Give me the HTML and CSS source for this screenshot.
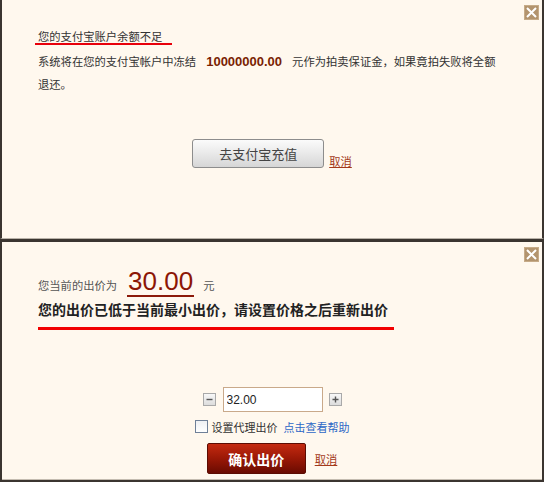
FILE: index.html
```html
<!DOCTYPE html>
<html lang="zh-CN">
<head>
    <meta charset="utf-8">
    <title>出价提示</title>
    <link rel="stylesheet" href="styles.css">
</head>
<body>
    <div class="panel panel-top">
        <a class="close" href="#" title="关闭">
            <svg width="15" height="15" viewBox="0 0 15 15"><rect x="0" y="0" width="15" height="15" fill="#b3946e"/><rect x="0.5" y="0.5" width="14" height="14" fill="none" stroke="#c6ab88"/><path d="M3 3L12 12M12 3L3 12" stroke="#fff" stroke-width="2"/></svg>
        </a>

        <div class="title">您的支付宝账户余额不足</div>
        <p class="notice">系统将在您的支付宝帐户中冻结<span class="amount">10000000.00</span>元作为拍卖保证金，如果竟拍失败将全额退还。</p>

        <div class="actions">
            <button type="button" class="btn-recharge">去支付宝充值</button>
            <a class="cancel" href="#">取消</a>
        </div>
    </div>

    <div class="panel panel-bottom">
        <a class="close" href="#" title="关闭">
            <svg width="15" height="15" viewBox="0 0 15 15"><rect x="0" y="0" width="15" height="15" fill="#b3946e"/><rect x="0.5" y="0.5" width="14" height="14" fill="none" stroke="#c6ab88"/><path d="M3 3L12 12M12 3L3 12" stroke="#fff" stroke-width="2"/></svg>
        </a>

        <div class="current">
            <span class="label">您当前的出价为</span>
            <span class="price">30.00</span>
            <span class="label unit">元</span>
        </div>
        <div class="warning">您的出价已低于当前最小出价，请设置价格之后重新出价</div>

        <div class="stepper">
            <span class="step">
                <svg width="13" height="13" viewBox="0 0 13 13"><path d="M3.5 6.5H9.5" stroke="#555" stroke-width="1.4"/></svg>
            </span>
            <input type="text" class="bid" value="32.00">
            <span class="step">
                <svg width="13" height="13" viewBox="0 0 13 13"><path d="M3.5 6.5H9.5M6.5 3.5V9.5" stroke="#555" stroke-width="1.4"/></svg>
            </span>
        </div>

        <div class="proxy">
            <span class="checkbox"></span>
            <span class="proxy-label">设置代理出价</span>
            <a class="help" href="#">点击查看帮助</a>
        </div>

        <div class="confirm">
            <button type="button" class="btn-confirm">确认出价</button>
            <a class="cancel" href="#">取消</a>
        </div>
    </div>
</body>
</html>
```

FILE: styles.css
```css
body { margin: 0; background-color: #fff8ee; font-family: "Noto Sans CJK SC", "Liberation Sans", sans-serif; font-size: 11.3px; color: #333; }

.panel { position: relative; box-sizing: border-box; width: 544px; background-color: #fff8ee; border-left: 2px solid #3b3530; border-right: 2px solid #3b3530; padding: 0 36px; }
.panel-top { height: 239px; padding-top: 30px; border-bottom: 1px solid #b9b2a8; }
.panel-bottom { height: 243px; padding-top: 26px; border-top: 3px solid #3b3530; border-bottom: 2px solid #3b3530; box-shadow: inset 0 -1px 0 #c4bcb0; }

.close { position: absolute; top: 5px; right: 3px; display: block; width: 15px; height: 15px; line-height: 0; }

.title { width: fit-content; margin-left: -3px; padding: 0 10px 0 3px; line-height: 13px; border-bottom: 2px solid #e8000b; }
.notice { width: 465px; margin: 5px 0 0 0; line-height: 23px; }
.amount { margin: 0 10px; font-family: "Liberation Sans", sans-serif; font-size: 13px; font-weight: bold; color: #7a1f02; }

.actions { display: flex; justify-content: center; align-items: flex-end; gap: 5px; margin-top: 43px; }
.btn-recharge { box-sizing: border-box; width: 132px; height: 29px; padding: 0; border: 1px solid #8d8d8d; border-radius: 3px; background: linear-gradient(#fbfbfb, #e9e9e9 50%, #d6d6d6); font-family: "Noto Sans CJK SC", sans-serif; font-size: 13px; color: #444; }
.cancel { color: #a3391a; text-decoration: underline; line-height: 14px; }

.current { display: flex; align-items: baseline; }
.label { font-size: 11.3px; color: #555; }
.price { margin-left: 10px; padding: 0 1px 1px 1px; line-height: 26px; border-bottom: 2px solid #8c1a0a; font-family: "Liberation Sans", sans-serif; font-size: 26px; color: #8c1605; }
.unit { margin-left: 9px; }

.warning { width: fit-content; margin-top: 2px; padding: 0 6px 8px 0; line-height: 20px; border-bottom: 3px solid #f20000; font-size: 14px; font-weight: bold; color: #222; }

.stepper { display: flex; justify-content: center; align-items: center; margin-top: 57px; height: 25px; }
.step { box-sizing: border-box; width: 13px; height: 13px; line-height: 0; border: 1px solid #a9a9a9; background: linear-gradient(#f8f8f8, #dcdcdc); }
.step svg { margin: -1px 0 0 -1px; }
.bid { box-sizing: border-box; width: 100px; height: 25px; margin: 0 6px 0 7px; padding: 0 3px; border: 1px solid #c9a98a; background-color: #fff; font-family: "Liberation Sans", sans-serif; font-size: 12px; color: #222; outline: none; }

.proxy { display: flex; justify-content: center; align-items: center; margin-top: 6px; height: 17px; }
.checkbox { box-sizing: border-box; width: 13px; height: 13px; margin-right: 4px; border: 1px solid #6f8098; background: linear-gradient(#eef0f3, #fff); }
.proxy-label { font-size: 11px; color: #333; }
.help { margin-left: 6px; font-size: 11px; color: #2d67c6; text-decoration: none; }

.confirm { display: flex; justify-content: center; align-items: center; gap: 9px; margin-top: 8px; }
.btn-confirm { box-sizing: border-box; width: 99px; height: 31px; padding: 0; border: 1px solid #5c0c02; border-radius: 2px; background: linear-gradient(#c42a10, #9a1806 50%, #6a0b01); font-family: "Noto Sans CJK SC", sans-serif; font-size: 14px; font-weight: bold; color: #fff; }
```
